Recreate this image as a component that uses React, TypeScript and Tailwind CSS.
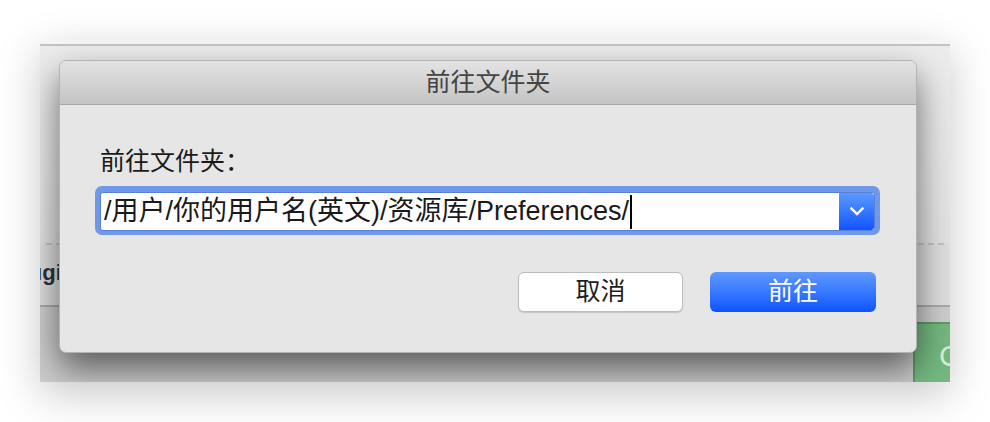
export default function App() {
  const font = "font-['Liberation_Sans','Noto_Sans_CJK_SC',sans-serif]";
  return (
    <div className={`w-[990px] h-[422px] bg-white pl-[40px] pt-[40px] ${font}`}>
      <div className="relative flex h-[342px] w-[910px] flex-col overflow-hidden bg-[#ebebeb] shadow-[0_12px_40px_rgba(0,0,0,0.22)]">
        {/* window behind the sheet */}
        <div className="h-[4px] bg-[#f5f5f5]" />
        <div className="h-[2px] bg-[#c3c3c3]" />
        <div className="h-[197px] bg-gradient-to-b from-[#ececec] to-[#e2e2e2]" />
        <div className="flex h-[62px] flex-col bg-[#dedede] px-[6px]">
          <div className="border-t-2 border-dashed border-[#c4c4c4]" />
          <div className="-ml-[38px] mt-[13px] text-[22px] font-semibold leading-[30px] text-[#2e3440]">
            Plugins
          </div>
        </div>
        <div className="h-[2px] bg-[#a9a9a9]" />
        <div className="flex flex-1 flex-col bg-[#cdcdcd]">
          <div className="h-[15px]" />
          <div className="ml-[873px] flex flex-1 items-center overflow-hidden border-l-2 border-t-2 border-[#5c9b66] bg-[#75b880] pl-[24px] pt-[6px] text-[30px] leading-none text-[#d6eed9]">
            C
          </div>
        </div>

        {/* sheet dialog */}
        <div className="absolute left-[19px] top-[20px] flex w-[858px] flex-col overflow-hidden rounded-[7px] border border-[#b3b3b3] bg-[#e6e6e6] shadow-[0_16px_34px_rgba(0,0,0,0.55)]">
          <div className="flex h-[44px] items-center justify-center border-b border-[#a6a6a6] bg-gradient-to-b from-[#e3e3e3] to-[#c4c4c4] text-[25px] text-[#444444]">
            前往文件夹
          </div>
          <div className="flex flex-col pb-[40px] pl-[35px] pt-[41px]">
            <div className="pl-[5px] text-[25px] leading-[30px] text-[#1a1a1a]">前往文件夹：</div>
            <div className="mt-[10px] w-[785px] rounded-[7px] bg-[#6f98e8] p-[5px] pt-[6px] pb-[4px]">
              <div className="flex h-[39px] overflow-hidden rounded-[3px] border border-[#5881d6] bg-white">
                <div className="flex flex-1 items-center pl-[3px] text-[27px] text-[#1a1a1a]">
                  <span>/用户/你的用户名(英文)/资源库/Preferences/</span>
                  <span className="ml-[1px] h-[34px] w-[2px] bg-black" />
                </div>
                <div className="flex w-[35px] items-center justify-center rounded-r-[3px] bg-gradient-to-b from-[#5b99ff] to-[#1451ff]">
                  <svg width="14" height="9" viewBox="0 0 14 9" fill="none">
                    <path d="M1.5 1.5 7 7l5.5-5.5" stroke="white" strokeWidth="2.4" strokeLinecap="square" />
                  </svg>
                </div>
              </div>
            </div>
            <div className="mt-[37px] flex justify-end gap-[27px] pr-[40px]">
              <button className="flex h-[40px] w-[165px] items-center justify-center rounded-[6px] border border-[#bcbcbc] bg-white text-[25px] text-[#1e1e1e] shadow-[0_1px_1px_rgba(0,0,0,0.15)]">
                取消
              </button>
              <button className="flex h-[40px] w-[166px] items-center justify-center rounded-[6px] bg-gradient-to-b from-[#5f98ff] to-[#0d52ff] text-[25px] text-white">
                前往
              </button>
            </div>
          </div>
        </div>
      </div>
    </div>
  );
}
